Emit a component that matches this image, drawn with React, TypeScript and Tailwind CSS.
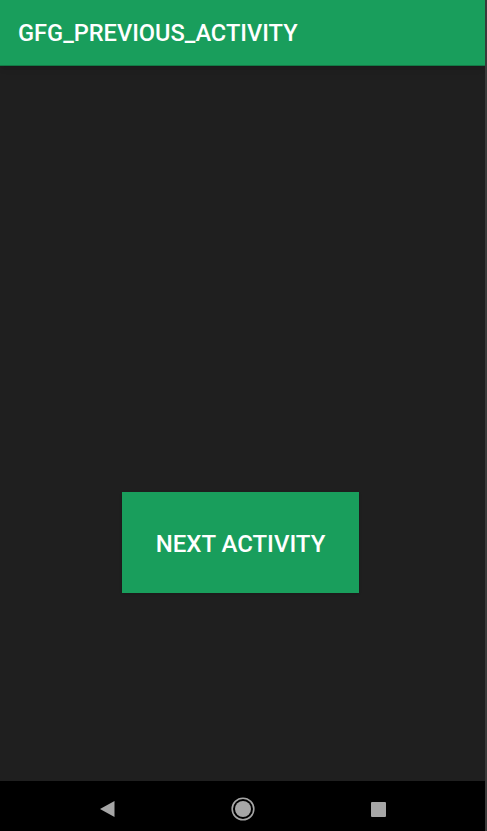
export default function App() {
  return (
    <div className="flex h-[831px] w-[487px] overflow-hidden bg-[#1f1f1f] font-['Roboto',sans-serif]">
      <div className="flex flex-1 flex-col">
        <header className="flex h-[66px] items-center border-b border-[#137a46] bg-[#199e5c] pt-[3px] pl-[18px] shadow-md">
          <h1 className="text-[23.6px] font-medium text-white">GFG_PREVIOUS_ACTIVITY</h1>
        </header>
        <main className="flex flex-1 justify-center pt-[426px] pr-[4px]">
          <button className="flex h-[101px] w-[237px] items-center justify-center bg-[#199e5c] pt-[3px] text-[24px] font-medium text-white shadow">
            NEXT ACTIVITY
          </button>
        </main>
        <nav className="flex h-[50px] items-center bg-black pt-[6px] pl-[100px]">
          <svg width="15" height="16" viewBox="0 0 15 16">
            <polygon points="14.5,0 14.5,16 0,8" fill="#a6a6a6" />
          </svg>
          <svg width="24" height="24" viewBox="0 0 24 24" className="ml-[116px]">
            <circle cx="12" cy="12" r="10.8" fill="none" stroke="#a6a6a6" strokeWidth="1.6" />
            <circle cx="12" cy="12" r="8" fill="#a6a6a6" />
          </svg>
          <div className="ml-[116px] h-[15px] w-[15px] rounded-[1px] bg-[#a6a6a6]" />
        </nav>
      </div>
      <div className="w-[2px] bg-[#3a3a3a]" />
    </div>
  )
}
